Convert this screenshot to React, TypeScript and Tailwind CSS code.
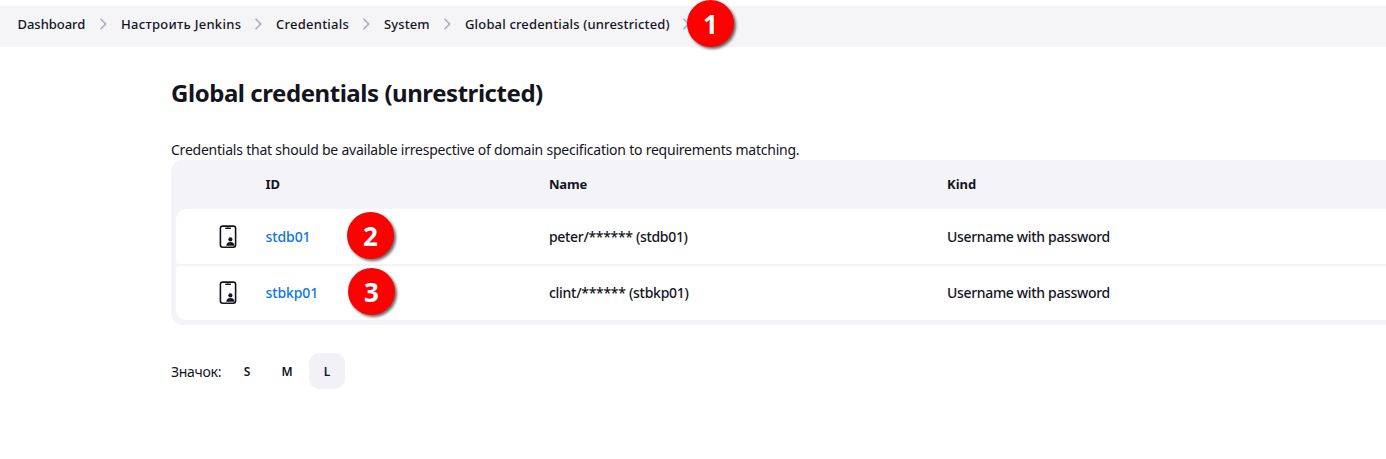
import type { ReactNode } from 'react';

const crumbs = [
  { label: 'Dashboard', style: 'w-[103.5px] tracking-[-0.04px]' },
  { label: 'Настроить Jenkins', style: 'w-[155px] tracking-[0.28px]' },
  { label: 'Credentials', style: 'w-[108px] tracking-[0.25px]' },
  { label: 'System', style: 'w-[81px] tracking-[0.1px]' },
  { label: 'Global credentials (unrestricted)', style: 'w-[239px] tracking-[0.16px]' },
];

const rows = [
  {
    id: 'stdb01',
    name: 'peter/****** (stdb01)',
    marker: '2',
    shape: 'h-[55px] rounded-t-[10px] rounded-b-[3px]',
    markerPos: 'left-[171px] top-[3px]',
    nameTracking: 'tracking-[-0.32px]',
  },
  {
    id: 'stbkp01',
    name: 'clint/****** (stbkp01)',
    marker: '3',
    shape: 'h-[54px] rounded-t-[3px] rounded-b-[10px]',
    markerPos: 'left-[172px] top-[2px]',
    nameTracking: 'tracking-[-0.28px]',
  },
];

function Marker({ children, className }: { children: ReactNode; className: string }) {
  return (
    <span
      className={`absolute flex size-[47px] items-center justify-center rounded-full bg-[#fe0000] pt-px font-['Open_Sans',sans-serif] text-[26px] leading-none font-bold text-white shadow-[2px_2px_3px_rgba(0,0,0,0.6)] ${className}`}
    >
      {children}
    </span>
  );
}

function Chevron() {
  return (
    <svg className="mx-auto h-3 w-[7px] shrink-0" viewBox="0 0 7 12" fill="none">
      <path d="M1 1.2 5.7 6 1 10.8" stroke="#a9a9bd" strokeWidth="1.6" strokeLinecap="round" strokeLinejoin="round" />
    </svg>
  );
}

function CredentialIcon() {
  return (
    <svg className="h-6 w-[18px]" viewBox="0 0 18 24" fill="none">
      <rect x="1.4" y="1.1" width="15.2" height="21.2" rx="2.2" stroke="#14141f" strokeWidth="1.6" />
      <path d="M6.8 3.2h4.6" stroke="#14141f" strokeWidth="1.4" strokeLinecap="round" />
      <circle cx="11.4" cy="14.4" r="2.1" fill="#14141f" />
      <path d="M7.3 20.7c0-2.3 1.6-3.6 4.1-3.6s4.1 1.3 4.1 3.6Z" fill="#14141f" />
    </svg>
  );
}

export default function App() {
  return (
    <div className="h-[459px] overflow-hidden bg-white pt-1.5 font-['Noto_Sans',sans-serif] text-sm text-[#14141f]">
      <nav className="relative flex h-[41px] items-center bg-[#f5f5f8] pb-[5px] pl-[17.5px] text-[13px] font-medium">
        {crumbs.map((c) => (
          <div key={c.label} className={`flex shrink-0 items-center whitespace-nowrap ${c.style}`}>
            <span>{c.label}</span>
            <Chevron />
          </div>
        ))}
        <Marker className="left-[687px] top-[-6px]">1</Marker>
      </nav>

      <main className="pl-[171px]">
        <h1 className="pt-[30px] text-[24px] leading-[32px] font-bold tracking-[-0.45px]">
          Global credentials (unrestricted)
        </h1>
        <p className="mt-[31px] h-5 leading-5 tracking-[-0.229px] whitespace-nowrap">
          Credentials that should be available irrespective of domain specification to requirements matching.
        </p>

        <section className="h-[165px] rounded-l-xl bg-[#f3f3f8] pl-[5px]">
          <div className="grid h-[49px] grid-cols-[89px_284px_398px_1fr] items-center text-[13px] font-bold">
            <span />
            <span className="pl-[0.5px]">ID</span>
            <span className="tracking-[-0.2px]">Name</span>
            <span>Kind</span>
          </div>
          <div className="flex w-[1230px] flex-col gap-0.5">
            {rows.map((r) => (
              <div
                key={r.id}
                className={`relative grid grid-cols-[43px_46px_284px_398px_1fr] items-center bg-white font-medium ${r.shape}`}
              >
                <span />
                <CredentialIcon />
                <a className="pl-[0.5px] tracking-[-0.1px] text-[#0b76e6]">{r.id}</a>
                <span className={r.nameTracking}>{r.name}</span>
                <span className="tracking-[-0.33px]">Username with password</span>
                <Marker className={r.markerPos}>{r.marker}</Marker>
              </div>
            ))}
          </div>
        </section>

        <div className="mt-7 flex h-9 items-center">
          <span className="w-[58px] pt-0.5 tracking-[-0.28px]">Значок:</span>
          <div className="flex gap-1 text-xs font-semibold">
            <span className="flex size-9 items-center justify-center pt-px">S</span>
            <span className="flex size-9 items-center justify-center pt-px">M</span>
            <span className="flex size-9 items-center justify-center rounded-[10px] bg-[#f2f1f8] pt-px">L</span>
          </div>
        </div>
      </main>
    </div>
  );
}
